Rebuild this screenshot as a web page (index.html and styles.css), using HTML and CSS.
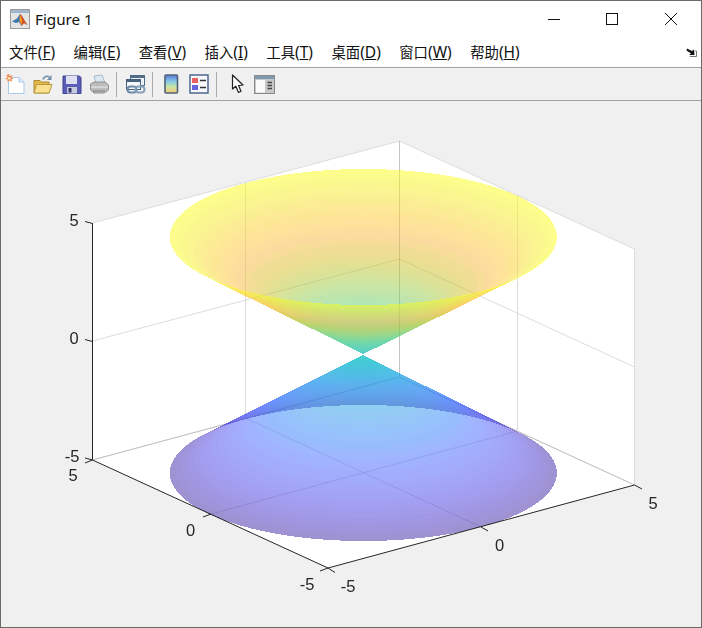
FILE: index.html
```html
<!DOCTYPE html>
<html lang="zh">
<head>
<meta charset="utf-8">
<title>Figure 1</title>
<link rel="stylesheet" href="styles.css">
</head>
<body>
<div class="window">
  <header class="titlebar">
    <svg class="app-icon" width="20" height="20" viewBox="0 0 20 20">
      <rect x="0.5" y="0.5" width="19" height="19" fill="#e4e4e4" stroke="#9a9a9a"/>
      <rect x="1" y="1" width="18" height="3" fill="#9fb6cc"/>
      <path d="M2 12.5 L7 9.5 L10 5 L12 7 L17 16 L14 14 L11.5 17 L9 13 L6 14 Z" fill="#3d78ad"/>
      <path d="M10 5 C11 5 12.5 8 17.5 16 L14 14 L11.5 17 L9.5 11 Z" fill="#d9541e"/>
      <path d="M10 5 L9.5 11 L11.5 17 L12 11 Z" fill="#f3a02e"/>
    </svg>
    <span class="title-text">Figure 1</span>
    <div class="controls">
      <svg width="14" height="14" viewBox="0 0 14 14"><path d="M0 6.5 H12" stroke="#111" fill="none"/></svg>
      <svg width="14" height="14" viewBox="0 0 14 14"><rect x="0.5" y="0.5" width="11" height="11" stroke="#111" fill="none"/></svg>
      <svg width="14" height="14" viewBox="0 0 14 14"><path d="M1 0 L13 12 M13 0 L1 12" stroke="#111" fill="none"/></svg>
    </div>
  </header>
  <nav class="menubar">
    <span class="menu-item">文件<span class="latin">(<u>F</u>)</span></span>
    <span class="menu-item">编辑<span class="latin">(<u>E</u>)</span></span>
    <span class="menu-item">查看<span class="latin">(<u>V</u>)</span></span>
    <span class="menu-item">插入<span class="latin">(<u>I</u>)</span></span>
    <span class="menu-item">工具<span class="latin">(<u>T</u>)</span></span>
    <span class="menu-item">桌面<span class="latin">(<u>D</u>)</span></span>
    <span class="menu-item">窗口<span class="latin">(<u>W</u>)</span></span>
    <span class="menu-item">帮助<span class="latin">(<u>H</u>)</span></span>
    <svg class="dock" width="11" height="9" viewBox="0 0 11 9"><path d="M1 0.5 L6 3 L8 1.5 L8.5 7 L3 7 L5 5.5 L0.5 2.5 Z" fill="#111"/><path d="M9 3 H10.5 V8.5 H4 V8" stroke="#777" fill="none"/></svg>
  </nav>
  <div class="toolbar">
    <svg class="tool" width="20" height="20" viewBox="0 0 20 20">
      <path d="M3.5 3.5 H14 L19 8 V19.5 H3.5 Z" fill="#fff" stroke="#a9c9e6"/>
      <path d="M14 3.5 V8 H19" fill="#dbe9f6" stroke="#a9c9e6"/>
      <path d="M4 0 L5 2 L7.5 1 L6.5 3.5 L8.5 4.5 L6.5 5.5 L7 8 L4.5 6.5 L2.5 8 L2.5 5.5 L0 4.5 L2.5 3.5 L1.5 1 Z" fill="#f08c50"/>
      <circle cx="4.3" cy="4.3" r="1.4" fill="#fde3c8"/>
    </svg>
    <svg class="tool tool-open" width="20" height="20" viewBox="0 0 20 20">
      <path d="M1 6.5 H7 L8.5 8 H16 V19 H1 Z" fill="#e5b64a" stroke="#a98a35"/>
      <path d="M1 19 L3.5 10.5 H19 L16 19 Z" fill="#f9e191" stroke="#b59a40"/>
      <path d="M10 5.5 C11 2.5 14 1.5 16.5 3" stroke="#6e8eaa" stroke-width="1.6" fill="none"/>
      <path d="M18.5 1 V6 H14 Z" fill="#6e8eaa"/>
    </svg>
    <svg class="tool tool-save" width="20" height="20" viewBox="0 0 20 20">
      <path d="M1 2 H17.5 L19 3.5 V19.5 H1 Z" fill="#5a5db5" stroke="#3f4290"/>
      <rect x="4" y="2" width="11" height="8" fill="#dfe1f2"/>
      <rect x="5" y="13" width="10" height="6.5" fill="#c8cade"/>
      <rect x="6.5" y="14" width="3" height="4.5" fill="#33366f"/>
    </svg>
    <svg class="tool tool-print" width="20" height="20" viewBox="0 0 20 20">
      <path d="M5 2 L13 1 L16 9 H7 Z" fill="#dce9f4" stroke="#a8bccc"/>
      <path d="M1.5 10 L5 8 H16 L19.5 11 V16 L15 19 H5 L1.5 16 Z" fill="#bcbcbc" stroke="#909090"/>
      <path d="M2 13 H19" stroke="#ededed"/>
      <path d="M4 17 H16" stroke="#7c7c7c"/>
    </svg>
    <span class="sep sep-first"></span>
    <svg class="tool tool-link" width="21" height="20" viewBox="0 0 21 20">
      <rect x="5.5" y="1.5" width="14" height="10" fill="#eef1f5" stroke="#4f6c88"/>
      <rect x="5.5" y="1.5" width="14" height="2.5" fill="#4f6c88"/>
      <rect x="1.5" y="5.5" width="14" height="10" fill="#f6f7f9" stroke="#46627e"/>
      <rect x="1.5" y="5.5" width="14" height="2.5" fill="#46627e"/>
      <rect x="2.5" y="12.5" width="9" height="6" rx="3" fill="none" stroke="#6d8aa5" stroke-width="2"/>
      <rect x="10.5" y="12.5" width="9" height="6" rx="3" fill="none" stroke="#86a0b8" stroke-width="2"/>
    </svg>
    <span class="sep sep-second"></span>
    <svg class="tool tool-cbar" width="15" height="20" viewBox="0 0 15 20">
      <defs><linearGradient id="cbar" x1="0" y1="0" x2="0" y2="1">
        <stop offset="0" stop-color="#5a78d8"/><stop offset="0.35" stop-color="#86c8e8"/><stop offset="0.65" stop-color="#c8e6a8"/><stop offset="1" stop-color="#f6c878"/>
      </linearGradient></defs>
      <rect x="1" y="1" width="12.5" height="18" rx="1" fill="url(#cbar)" stroke="#4d6178" stroke-width="1.6"/>
    </svg>
    <svg class="tool tool-legend" width="20" height="20" viewBox="0 0 20 20">
      <rect x="1" y="1" width="18" height="18" fill="#f7f8fb" stroke="#4d6690" stroke-width="1.5"/>
      <rect x="3" y="4" width="6" height="5" fill="#e86060"/>
      <rect x="3" y="11" width="6" height="5" fill="#6464e0"/>
      <path d="M11 6.5 H17 M11 13.5 H17" stroke="#333" stroke-width="1.4"/>
    </svg>
    <span class="sep sep-third"></span>
    <svg class="tool tool-pointer" width="14" height="20" viewBox="0 0 14 20">
      <path d="M1.5 1 V15 L4.8 12.2 L7.5 18.5 L10 17.2 L7.6 11.5 L12 11 Z" fill="#fff" stroke="#222" stroke-width="1.2" stroke-linejoin="round"/>
    </svg>
    <svg class="tool tool-panel" width="21" height="20" viewBox="0 0 21 20">
      <rect x="0.5" y="1.5" width="20" height="18" fill="#c8c8c8" stroke="#8a8a8a"/>
      <rect x="1" y="2" width="19" height="3" fill="#7e99b2"/>
      <rect x="2" y="6" width="9" height="12.5" fill="#fbfbfb"/>
      <path d="M13.5 8.5 H18 M13.5 11.5 H18 M13.5 14.5 H18" stroke="#444" stroke-width="1.3"/>
    </svg>
  </div>
  <main class="figure">
    <svg class="layer" width="700" height="526" viewBox="1 101 700 526">
      <path class="box" d="M92.5 223 L399.5 141 L634.5 249 V485 L328 568 L92.5 460 Z"/>
      <g class="grid">
        <path d="M92.5 223 L399.5 141 L634.5 249"/>
        <path d="M92.5 341 L399.5 259 L634.5 367"/>
        <path d="M92.5 460 L399.5 377 L634.5 485"/>
        <path d="M245.5 182 V418 M399.5 141 V377 M517.5 195 V431 M634.5 249 V485"/>
        <path d="M245.5 418 L481 527 M517.5 431 L211 514"/>
      </g>
      <path class="grid-strong" d="M399.5 141 V377 M92.5 460 L399.5 377 L634.5 485"/>
    </svg>
    <canvas id="surface" class="layer" width="700" height="526"></canvas>
    <svg class="layer" width="700" height="526" viewBox="1 101 700 526">
      <path class="axis" d="M92.5 223 V460 L328 568 L634.5 485"/>
      <path class="axis" d="M92.5 223.5 L85 221.5 M92.5 341.5 L85 339.5 M92.5 460 L85 458 M92.5 460 L85 463 M211 514 L203 517 M328 568 L320 571 M328 568 L335 572.5 M481 527 L488 531 M634.5 485 L642 489"/>
      <g class="tick">
        <text x="74" y="225.5">5</text>
        <text x="74" y="343.5">0</text>
        <text x="72" y="462">-5</text>
        <text x="73" y="481">5</text>
        <text x="190.5" y="536">0</text>
        <text x="307" y="590">-5</text>
        <text x="348" y="592">-5</text>
        <text x="499.5" y="551">0</text>
        <text x="653" y="509">5</text>
      </g>
    </svg>
  </main>
</div>
<script src="plot.js"></script>
</body>
</html>
```
FILE: styles.css
```css
* { box-sizing: border-box; }
html, body { margin: 0; padding: 0; }
body { width: 702px; height: 628px; overflow: hidden; background: #f0f0f0; }
.window {
  width: 702px; height: 628px;
  display: flex; flex-direction: column;
  border: 1px solid #6a6a6a;
  background: #fff;
  font-family: "Noto Sans", "Noto Sans CJK SC", sans-serif;
  color: #111;
}
.titlebar {
  height: 36px; flex: none;
  display: flex; align-items: center;
  padding-left: 9px;
}
.app-icon { flex: none; }
.title-text { margin-left: 5px; font-size: 15.2px; line-height: 20px; }
.controls { margin-left: auto; margin-right: 23px; display: flex; gap: 44px; padding-top: 1px; }
.menubar {
  height: 31px; flex: none;
  display: flex; align-items: center; gap: 18.4px;
  padding: 0 4px 0 8px;
  border-bottom: 1px solid #a0a0a0;
  font-family: "Noto Sans CJK SC", sans-serif;
  font-size: 14.4px;
}
.latin { font-family: "Noto Sans", sans-serif; font-size: 15.5px; }
.dock { margin-left: auto; margin-top: 1px; }
.toolbar {
  height: 33px; flex: none;
  display: flex; align-items: center;
  padding-left: 4px;
  background: #f0f0f0;
  border-bottom: 1px solid #a0a0a0;
}
.tool { flex: none; }
.tool-open { margin-left: 8px; }
.tool-save { margin-left: 9px; }
.tool-print { margin-left: 7px; }
.tool-link { margin-left: 8px; }
.tool-cbar { margin-left: 11px; }
.tool-legend { margin-left: 10px; }
.tool-pointer { margin-left: 14px; }
.tool-panel { margin-left: 9px; }
.sep { width: 1px; height: 25px; background: #a8a8a8; flex: none; }
.sep-first { margin-left: 7px; }
.sep-second { margin-left: 6px; }
.sep-third { margin-left: 7px; }
.figure { position: relative; flex: 1; background: #f0f0f0; }
.layer { position: absolute; left: 0; top: 0; display: block; }
.box { fill: #fff; }
.grid path { fill: none; stroke: #dcdcdc; stroke-width: 1; }
.grid-strong { fill: none; stroke: #c4c4c4; stroke-width: 1; }
.axis { fill: none; stroke: #262626; stroke-width: 1; }
.tick text {
  font-family: "Liberation Sans", Arial, sans-serif;
  font-size: 16.5px; fill: #262626; text-anchor: middle;
}
```
FILE: plot.js
```js
// Two semi-transparent cones z = +/-sqrt(x^2+y^2), parula colormap, FaceAlpha 0.5.
var PARULA = [[.2422,.1504,.6603],[.2504,.165,.7076],[.2578,.1818,.7511],[.2647,.1978,.7952],[.2706,.2147,.8364],[.2751,.2342,.871],[.2783,.2559,.8991],[.2803,.2782,.9221],[.2813,.3006,.9414],[.281,.3228,.9579],[.2795,.3447,.9717],[.276,.3667,.9829],[.2699,.3892,.9906],[.2602,.4123,.9952],[.244,.4358,.9988],[.2206,.4603,.9973],[.1963,.4847,.9892],[.1834,.5074,.9798],[.1786,.5289,.9682],[.1764,.5499,.952],[.1687,.5703,.9359],[.154,.5902,.9218],[.146,.6091,.9079],[.138,.6276,.8973],[.1248,.6459,.8883],[.1113,.6635,.8763],[.0952,.6798,.8598],[.0689,.6948,.8394],[.0297,.7082,.8163],[.0036,.7203,.7917],[.0067,.7312,.766],[.0433,.7411,.7394],[.0964,.75,.712],[.1408,.7584,.6842],[.1717,.767,.6554],[.1938,.7758,.6251],[.2161,.7843,.5923],[.247,.7918,.5567],[.2906,.7973,.5188],[.3406,.8008,.4789],[.3909,.8029,.4354],[.4456,.8024,.3909],[.5044,.7993,.348],[.5616,.7942,.3045],[.6174,.7876,.2612],[.672,.7793,.2227],[.7242,.7698,.191],[.7738,.7598,.1646],[.8203,.7498,.1535],[.8634,.7406,.1596],[.9035,.733,.1774],[.9393,.7288,.21],[.9728,.7298,.2394],[.9956,.7434,.2371],[.997,.7659,.2199],[.9952,.7893,.2028],[.9892,.8136,.1885],[.9786,.8386,.1766],[.9676,.8639,.1643],[.961,.889,.1537],[.9597,.9135,.1423],[.9628,.9373,.1265],[.9691,.9606,.1064],[.9769,.9839,.0805]];

var canvas = document.getElementById("surface");
var ctx = canvas.getContext("2d");
var img = ctx.createImageData(canvas.width, canvas.height);
var CX = 363.3, A = 193.5, B = 68, ALPHA = 0.5;

function color(idx) {
  return PARULA[Math.min(63, Math.max(0, Math.floor(idx * 64)))];
}

for (var j = 0; j < canvas.height; j++) {
  var py = j + 101 + 0.5;
  var upper = py < 354.5;
  var v = upper ? 354 - py : py - 355;
  var H = upper ? 117 : 118;
  if (v <= 0) continue;
  var qa = H * H / (B * B) - 1;
  var qb = -2 * v * H / (B * B);
  for (var i = 0; i < canvas.width; i++) {
    var u = (i + 1 + 0.5 - CX) / A;
    var qc = v * v / (B * B) + u * u;
    var d = qb * qb - 4 * qa * qc;
    if (d < 0) continue;
    var s = Math.sqrt(d);
    var small = (-qb - s) / (2 * qa);
    var large = (-qb + s) / (2 * qa);
    var front = upper ? large : small;
    var back = upper ? small : large;
    var hasF = front > 0 && front <= 1;
    var hasB = back > 0 && back <= 1;
    if (!hasF && !hasB) continue;
    var r = 0, g = 0, b = 0, a = 0;
    if (hasB) {
      var cb = color(upper ? (1 + back) / 2 : (1 - back) / 2);
      r = cb[0] * ALPHA; g = cb[1] * ALPHA; b = cb[2] * ALPHA; a = ALPHA;
    }
    if (hasF) {
      var cf = color(upper ? (1 + front) / 2 : (1 - front) / 2);
      r = cf[0] * ALPHA + r * (1 - ALPHA);
      g = cf[1] * ALPHA + g * (1 - ALPHA);
      b = cf[2] * ALPHA + b * (1 - ALPHA);
      a = ALPHA + a * (1 - ALPHA);
    }
    var o = (j * canvas.width + i) * 4;
    img.data[o] = 255 * r / a;
    img.data[o + 1] = 255 * g / a;
    img.data[o + 2] = 255 * b / a;
    img.data[o + 3] = 255 * a;
  }
}
ctx.putImageData(img, 0, 0);
```
